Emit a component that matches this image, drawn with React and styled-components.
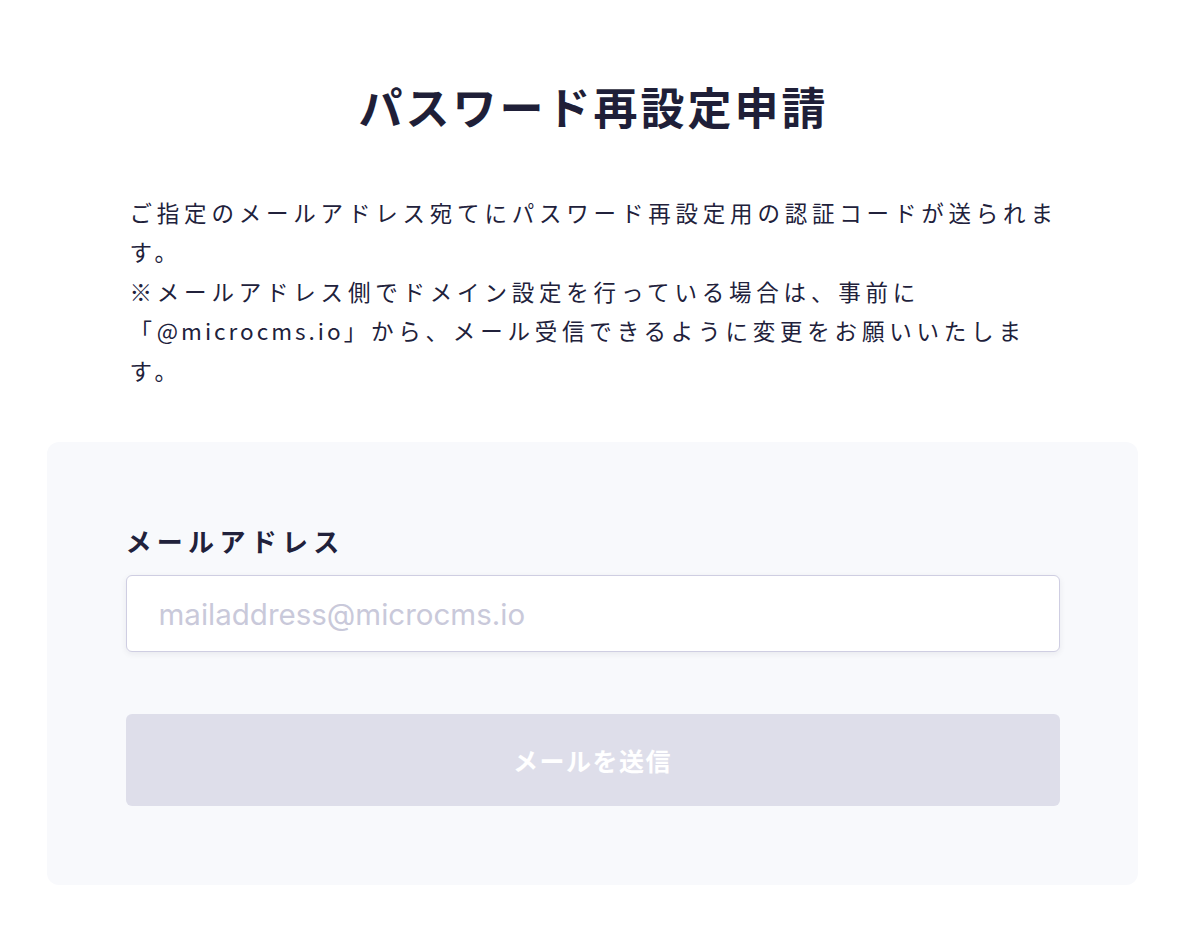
import React, { useState } from 'react';
import styled, { createGlobalStyle } from 'styled-components';

const GlobalStyle = createGlobalStyle`
  html, body {
    margin: 0;
    padding: 0;
    background: #ffffff;
  }
  * {
    box-sizing: border-box;
  }
  body {
    font-family: "Noto Sans CJK JP", "Noto Sans", sans-serif;
    color: #21213b;
  }
`;

// パスワード再設定申請ページ
const App = () => {
  const [email, setEmail] = useState('');

  return (
    <>
      <GlobalStyle />
      <Page>
        <Main>
          <Title>パスワード再設定申請</Title>
          <Description>
            ご指定のメールアドレス宛てにパスワード再設定用の認証コードが送られます。
            <br />
            ※メールアドレス側でドメイン設定を行っている場合は、事前に
            <br />
            「<Domain>@microcms.io</Domain>」から、メール受信できるように変更をお願いいたします。
          </Description>
          <FormCard onSubmit={(e) => e.preventDefault()}>
            <Label htmlFor="email">メールアドレス</Label>
            <Input
              id="email"
              type="email"
              placeholder="mailaddress@microcms.io"
              value={email}
              onChange={(e) => setEmail(e.target.value)}
            />
            <SubmitButton type="submit" disabled={!email}>
              メールを送信
            </SubmitButton>
          </FormCard>
        </Main>
      </Page>
    </>
  );
};

// Estilos
const Page = styled.div`
  width: 100%;
  min-height: 100vh;
  padding-right: 15px;
`;

const Main = styled.main`
  width: 1091px;
  margin: 0 auto;
  padding-top: 73px;
  display: flex;
  flex-direction: column;
  align-items: center;
`;

const Title = styled.h1`
  margin: 0;
  font-size: 44px;
  line-height: 66px;
  font-weight: 700;
  letter-spacing: 3px;
  padding-left: 3px;
  color: #1f1f38;
`;

const Description = styled.p`
  align-self: flex-start;
  margin: 54px 0 0 83px;
  width: 932px;
  font-size: 22.5px;
  line-height: 39.4px;
  letter-spacing: 4.8px;
  color: #21213b;
`;

const Domain = styled.span`
  letter-spacing: 3px;
`;

const FormCard = styled.form`
  margin-top: 52px;
  align-self: stretch;
  background: #f8f9fc;
  border-radius: 12px;
  padding: 80px 78px 79px 79px;
  display: flex;
  flex-direction: column;
`;

const Label = styled.label`
  font-size: 26px;
  line-height: 37px;
  font-weight: 700;
  letter-spacing: 5.3px;
  color: #21213b;
`;

const Input = styled.input`
  margin-top: 16px;
  height: 77px;
  width: 100%;
  padding: 0 32px;
  border: 1px solid #cfcee2;
  border-radius: 6px;
  background: #ffffff;
  box-shadow: 0 2px 6px rgba(33, 33, 59, 0.07);
  font-family: Inter, "Noto Sans CJK JP", sans-serif;
  font-size: 29.5px;
  color: #21213b;
  outline: none;

  &::placeholder {
    color: #c9c9da;
  }
`;

const SubmitButton = styled.button`
  margin-top: 62px;
  height: 92px;
  width: 100%;
  border: none;
  border-radius: 6px;
  background: #dedeea;
  color: #ffffff;
  font-family: "Noto Sans CJK JP", sans-serif;
  font-size: 25px;
  font-weight: 700;
  letter-spacing: 1.5px;
  cursor: pointer;

  &:disabled {
    cursor: default;
  }
`;

export default App;
